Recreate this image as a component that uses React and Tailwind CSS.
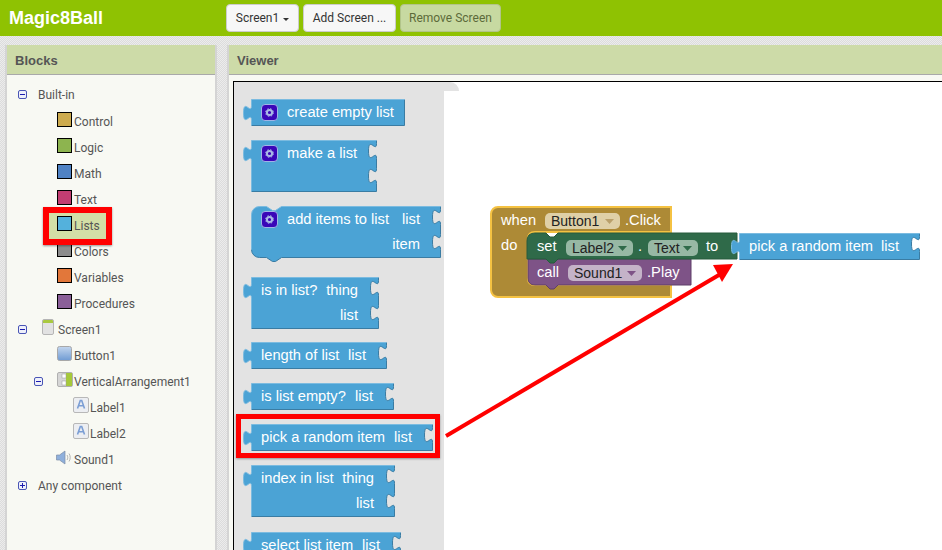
const BLUE = { fill: '#4ba3d5', light: '#7bbbe0', dark: '#3a7ca3' };

// builds the blockly outline: right side + bottom, then left side + top
function blockPaths(w, h, sockets, kind) {
  const L = 8;
  const R = L + w;
  let right = '';
  sockets.forEach((row) => {
    const y = row * 25 + 3;
    right += `V ${y} c 0,10 -8,-8 -8,7.5 s 8,-2.5 8,7.5 `;
  });
  right += `V ${h} `;
  let left;
  let start;
  if (kind === 'stmt') {
    right += `H ${L + 30} l -6,4 -3,0 -6,-4 H ${L + 8} a 8,8 0 0 1 -8,-8 `;
    start = `M ${L},${h - 8} `;
    left = `V 8 a 8,8 0 0 1 8,-8 H ${L + 15} l 6,4 3,0 6,-4 H ${R} `;
  } else {
    right += `H ${L} `;
    start = `M ${L},${h} `;
    left = `V 21 c 0,-10 -8,8 -8,-7.5 s 8,2.5 8,-7.5 V 0 H ${R} `;
  }
  return {
    fill: `M ${R},0 ${right}${left}Z`,
    dark: `M ${R},0 ${right}`,
    light: `${start}${left}`,
  };
}

function Gear() {
  return (
    <svg width="17" height="17" viewBox="0 0 17 17" className="mr-[9px] shrink-0">
      <rect x="0.5" y="0.5" width="16" height="16" rx="3.5" fill="#3a06b8" stroke="#9fb4e6" />
      <circle cx="8.5" cy="8.5" r="2.6" fill="none" stroke="#a9b9e6" strokeWidth="2" />
      <circle cx="8.5" cy="8.5" r="3.9" fill="none" stroke="#a9b9e6" strokeWidth="1" strokeDasharray="1.5 1.6" />
    </svg>
  );
}

function Block({ w, rows, sockets = [], kind, gear, className = 'relative', children }) {
  const h = rows.length * 25 + 1;
  const p = blockPaths(w, h, sockets, kind);
  return (
    <div className={`shrink-0 ${className}`} style={{ width: w + 8, height: h }}>
      <svg className="absolute left-0 top-0 overflow-visible" width={w + 8} height={h}>
        <g transform="translate(0.5 0.5)">
          <path d={p.fill} fill={BLUE.fill} />
          <path d={p.dark} fill="none" stroke={BLUE.dark} />
          <path d={p.light} fill="none" stroke={BLUE.light} />
        </g>
      </svg>
      <div className="relative pl-[18px] pr-[20px] pt-[1px] text-[14.7px] text-white font-['Liberation_Sans',sans-serif]">
        {rows.map((r, i) => (
          <div key={i} className="flex h-[25px] items-center justify-between whitespace-nowrap">
            <span className="flex items-center">
              {gear && i === 0 && <Gear />}
              {r[0]}
            </span>
            <span>{r[1]}</span>
          </div>
        ))}
      </div>
      {children}
    </div>
  );
}

function Expander({ plus }) {
  return (
    <svg width="9" height="9" viewBox="0 0 9 9" className="mb-[2px] mr-[11px] shrink-0">
      <rect x="0.5" y="0.5" width="8" height="8" rx="1.5" fill="#eef0fa" stroke="#4a55b5" />
      <path d={plus ? 'M2 4.5h5M4.5 2v5' : 'M2 4.5h5'} stroke="#1c1cb0" />
    </svg>
  );
}

function Swatch({ color }) {
  return <span className={`mb-[6px] mr-[2px] h-[15px] w-[15px] shrink-0 border border-black ${color}`} />;
}

function ScreenIcon() {
  return (
    <svg width="12" height="16" viewBox="0 0 12 16" className="mb-[6px] ml-[4px] mr-[4px] shrink-0">
      <rect x="0.5" y="0.5" width="11" height="15" rx="1.5" fill="#e2e2e2" stroke="#b5b5b5" />
      <path d="M1 4V2a1 1 0 0 1 1-1h8a1 1 0 0 1 1 1v2z" fill="#a9c93f" />
    </svg>
  );
}

function ButtonIcon() {
  return (
    <svg width="15" height="15" viewBox="0 0 15 15" className="mb-[6px] mr-[2px] shrink-0">
      <defs>
        <linearGradient id="btn" x1="0" y1="0" x2="0" y2="1">
          <stop offset="0" stopColor="#c3d6ee" />
          <stop offset="1" stopColor="#6f9bd3" />
        </linearGradient>
      </defs>
      <rect x="0.5" y="0.5" width="14" height="14" rx="2" fill="url(#btn)" stroke="#a8a8a8" />
    </svg>
  );
}

function ArrangementIcon() {
  return (
    <svg width="16" height="15" viewBox="0 0 16 15" className="mb-[6px] mr-[1px] shrink-0">
      <rect x="0.5" y="0.5" width="15" height="14" rx="1.5" fill="#d6d6d6" stroke="#b0b0b0" />
      <rect x="9" y="1" width="6" height="13" fill="#a6c93a" />
      <rect x="5" y="2" width="4" height="4" fill="#fff" stroke="#999" strokeWidth="0.5" />
      <rect x="5" y="9" width="4" height="4" fill="#fff" stroke="#999" strokeWidth="0.5" />
    </svg>
  );
}

function LabelIcon() {
  return (
    <svg width="16" height="16" viewBox="0 0 16 16" className="mb-[6px] mr-[1px] shrink-0">
      <rect x="0.5" y="0.5" width="15" height="15" rx="1.5" fill="#eceef2" stroke="#b8b8b8" />
      <path d="M4.5 11.5 7.3 3.5h1.4l2.8 8M5.800 8.800h4.400" fill="none" stroke="#7b9ed4" strokeWidth="1.6" />
    </svg>
  );
}

function SoundIcon() {
  return (
    <svg width="16" height="15" viewBox="0 0 16 15" className="mb-[6px] mr-[2px] shrink-0">
      <path d="M0.5 5h3L9 1v13L3.500 10h-3z" fill="#8fb0dc" stroke="#7d8ea6" strokeWidth="0.7" />
      <path d="M11 5c1 1.500 1 3.500 0 5M13 3.500c1.600 2.400 1.600 5.600 0 8" fill="none" stroke="#a0a0a0" strokeWidth="0.8" />
    </svg>
  );
}

function TreeRow({ className = '', children }) {
  return <div className={`flex h-[26px] items-center ${className}`}>{children}</div>;
}

const categories = [
  ['Control', 'bg-[#cdab4e]'],
  ['Logic', 'bg-[#8db44f]'],
  ['Math', 'bg-[#4f82c4]'],
  ['Text', 'bg-[#c23d72]'],
  ['Lists', 'bg-[#54b1dc]'],
  ['Colors', 'bg-[#8c8c8c]'],
  ['Variables', 'bg-[#e2773a]'],
  ['Procedures', 'bg-[#8a5f98]'],
];

function PanelTitle({ children }) {
  return (
    <div className="flex h-[30px] shrink-0 items-center border-b border-[#a9a9a9] bg-[#cddba8] pl-[8px] pt-[2px] font-['Liberation_Sans',sans-serif] text-[13px] font-bold text-[#555]">
      {children}
    </div>
  );
}

function Sidebar() {
  return (
    <aside className="flex w-[212px] shrink-0 flex-col border-x-2 border-[#d4d4d4] bg-[#f8f9f3]">
      <PanelTitle>Blocks</PanelTitle>
      <div className="pt-[7px] font-['Roboto',sans-serif] text-[12px] text-[#555]">
        <TreeRow className="mb-[1px] pl-[11px]">
          <Expander />
          Built-in
        </TreeRow>
        {categories.map(([name, color]) =>
          name === 'Lists' ? (
            <TreeRow key={name} className="relative z-10 ml-[42px] w-[57px] bg-[#d3dfa6] pl-[8px]">
              <Swatch color={color} />
              {name}
              <span className="absolute -inset-[6px] border-[6px] border-[#f00] shadow-[0_1px_2px_rgba(0,0,0,0.4)]" />
            </TreeRow>
          ) : (
            <TreeRow key={name} className="pl-[50px]">
              <Swatch color={color} />
              {name}
            </TreeRow>
          )
        )}
        <TreeRow className="pl-[11px]">
          <Expander />
          <ScreenIcon />
          Screen1
        </TreeRow>
        <TreeRow className="pl-[50px]">
          <ButtonIcon />
          Button1
        </TreeRow>
        <TreeRow className="pl-[27px]">
          <Expander />
          <span className="mr-[3px]" />
          <ArrangementIcon />
          VerticalArrangement1
        </TreeRow>
        <TreeRow className="pl-[66px]">
          <LabelIcon />
          Label1
        </TreeRow>
        <TreeRow className="pl-[66px]">
          <LabelIcon />
          Label2
        </TreeRow>
        <TreeRow className="pl-[49px]">
          <SoundIcon />
          Sound1
        </TreeRow>
        <TreeRow className="h-[24px] pl-[11px]">
          <Expander plus />
          Any component
        </TreeRow>
      </div>
    </aside>
  );
}

function Flyout() {
  return (
    <div className="flex w-[210px] min-h-0 flex-1 flex-col gap-[15px] overflow-hidden bg-[#e3e3e3] pl-[9px] pt-[8px]">
      <Block w={153} rows={[['create empty list', '']]} gear />
      <Block w={125} rows={[['make a list', ''], ['', '']]} sockets={[0, 1]} gear />
      <Block w={189} kind="stmt" rows={[['add items to list', 'list'], ['', 'item']]} sockets={[0, 1]} gear />
      <Block w={127} rows={[['is in list?', 'thing'], ['', 'list']]} sockets={[0, 1]} className="relative mt-[5px]" />
      <Block w={135} rows={[['length of list', 'list']]} sockets={[0]} className="relative -mt-[1px]" />
      <Block w={142} rows={[['is list empty?', 'list']]} sockets={[0]} />
      <Block w={181} rows={[['pick a random item', 'list']]} sockets={[0]}>
        <span className="absolute -bottom-[8px] -left-[7px] -right-[8px] -top-[10px] border-[5px] border-[#f00] shadow-[0_1px_2px_rgba(0,0,0,0.35)]" />
      </Block>
      <Block w={143} rows={[['index in list', 'thing'], ['', 'list']]} sockets={[0, 1]} />
      <Block w={149} rows={[['select list item', 'list'], ['', '']]} sockets={[0, 1]} className="relative mt-[1px]" />
    </div>
  );
}

function Pill({ x, y, w, label, bg, tri }) {
  const tx = x + w - 15;
  return (
    <g>
      <rect x={x} y={y} width={w} height="16" rx="5" fill={bg} />
      <text x={x + 6} y={y + 13} fontSize="14" fill="#222">{label}</text>
      <path d={`M${tx},${y + 6} h9 l-4.500,5 z`} fill={tri} />
    </g>
  );
}

// the when/set/call stack plus the arrow, drawn in page coordinates
function Workspace() {
  return (
    <svg
      className="absolute left-0 top-0 font-['Liberation_Sans',sans-serif]"
      width="708"
      height="468"
      viewBox="234 82 708 468"
    >
      <path
        d="M498,207 H671 V232 H535 Q528,232 528,239 V278 Q528,285 535,285 H671 V297 H498 A7,7 0 0 1 491,290 V214 A7,7 0 0 1 498,207 Z"
        fill="#ad8a36"
        stroke="#f5c242"
        strokeWidth="2"
      />
      <path d="M528,259 H691 V285 H558 l-4,4 h-4 l-4,-4 H535 Q528,285 528,278 Z" fill="#7e5387" stroke="#5f3f68" strokeWidth="1" />
      <path d="M535,233 H546 l4,4 h4 l4,-4 H737 V259 H558 l-4,4 h-4 l-4,-4 H527 V241 Q527,233 535,233 Z" fill="#2f6a49" stroke="#265a3d" strokeWidth="1" />
      <g fontSize="14.7" fill="#fff">
        <text x="501" y="225">when</text>
        <text x="625" y="225">.Click</text>
        <text x="501" y="250">do</text>
        <text x="537" y="251">set</text>
        <text x="638" y="251">.</text>
        <text x="706" y="251">to</text>
        <text x="537" y="277">call</text>
        <text x="647" y="277">.Play</text>
      </g>
      <Pill x={545} y={213} w={75} label="Button1" bg="#dfd0a7" tri="#b9a06b" />
      <Pill x={566} y={240} w={67} label="Label2" bg="#97b8a4" tri="#2f6a49" />
      <Pill x={648} y={240} w={50} label="Text" bg="#97b8a4" tri="#2f6a49" />
      <Pill x={568} y={265} w={74} label="Sound1" bg="#c4b3c8" tri="#7e5387" />
      <path d="M446,436 L724,272" stroke="#f00" strokeWidth="4" />
      <polygon points="733,264 713,265 722,282" fill="#f00" />
    </svg>
  );
}

function Viewer() {
  return (
    <section className="flex min-w-0 flex-1 flex-col border-l-2 border-[#d4d4d4] bg-[#f8f9f3]">
      <PanelTitle>Viewer</PanelTitle>
      <div className="flex min-h-0 flex-1 flex-col pl-[4px] pt-[6px]">
        <div className="relative flex min-h-0 flex-1 flex-col overflow-hidden border-l border-t border-black bg-white">
          <div className="h-[9px] w-[225px] shrink-0 rounded-tr-[9px] bg-[#e3e3e3]" />
          <Flyout />
          <Workspace />
          <Block w={180} rows={[['pick a random item', 'list']]} sockets={[0]} className="absolute left-[497px] top-[151px]" />
        </div>
      </div>
    </section>
  );
}

export default function App() {
  return (
    <div className="flex h-screen w-screen flex-col overflow-hidden bg-[#e4e4e4] bg-[conic-gradient(#dcdcdc_25%,#ececec_0_50%,#dcdcdc_0_75%,#ececec_0)] bg-[length:2px_2px]">
      <header className="flex h-[36px] shrink-0 items-center bg-[#8fc202]">
        <div className="w-[226px] pl-[9px] font-['Liberation_Sans',sans-serif] text-[18px] font-bold text-white">Magic8Ball</div>
        <div className="flex gap-[4px] font-['Roboto',sans-serif] text-[12px]">
          <button className="flex h-[28px] w-[73px] items-center justify-center gap-[4px] rounded-[4px] border border-[#ccc] bg-[#f7f7f7] text-[#333]">
            Screen1
            <span className="mt-[2px] h-0 w-0 border-x-[3px] border-t-[3px] border-x-transparent border-t-[#333]" />
          </button>
          <button className="h-[28px] w-[93px] rounded-[4px] border border-[#ccc] bg-[#f7f7f7] text-[#333]">Add Screen ...</button>
          <button className="h-[28px] w-[101px] rounded-[4px] border border-[#b2c48a] bg-[#c7d9a1] text-[#5c6a3a]">Remove Screen</button>
        </div>
      </header>
      <main className="flex min-h-0 flex-1 gap-[10px] pl-[5px] pt-[9px]">
        <Sidebar />
        <Viewer />
      </main>
    </div>
  );
}
